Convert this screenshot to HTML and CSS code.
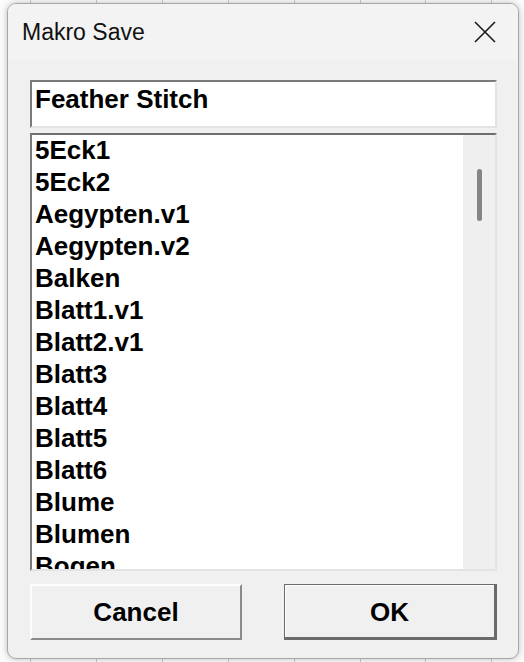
FILE: index.html
```html
<!DOCTYPE html>
<html>
<head>
<meta charset="utf-8">
<link rel="stylesheet" href="styles.css">
</head>
<body>
<div class="dialog">
  <div class="titlebar">
    <span class="title">Makro Save</span>
    <svg class="close" width="22" height="22" viewBox="0 0 22 22"><path d="M1 1 L21 21 M21 1 L1 21" stroke="#1a1a1a" stroke-width="1.6" fill="none"/></svg>
  </div>
  <div class="client">
    <div class="edit">Feather Stitch</div>
    <div class="list">
      <div class="items">
        <div class="item">5Eck1</div>
        <div class="item">5Eck2</div>
        <div class="item">Aegypten.v1</div>
        <div class="item">Aegypten.v2</div>
        <div class="item">Balken</div>
        <div class="item">Blatt1.v1</div>
        <div class="item">Blatt2.v1</div>
        <div class="item">Blatt3</div>
        <div class="item">Blatt4</div>
        <div class="item">Blatt5</div>
        <div class="item">Blatt6</div>
        <div class="item">Blume</div>
        <div class="item">Blumen</div>
        <div class="item">Bogen</div>
      </div>
      <div class="scrollbar"><div class="thumb"></div></div>
    </div>
    <div class="buttons">
      <div class="btn">Cancel</div>
      <div class="btn default">OK</div>
    </div>
  </div>
</div>
</body>
</html>
```
FILE: styles.css
```css
html, body {
  margin: 0;
  padding: 0;
}
body {
  width: 524px;
  height: 662px;
  overflow: hidden;
  background-color: #fbfbfb;
  background-image: repeating-linear-gradient(to right, transparent 0, transparent 30px, #c8c8c8 30px, #c8c8c8 31px, transparent 31px, transparent 65.9px);
  font-family: "Liberation Sans", Arial, sans-serif;
}
.dialog {
  margin: 3px 0 0 7px;
  width: 510px;
  height: 654px;
  border: 1px solid #a8a8a8;
  border-radius: 9px;
  background: #f0f0f0;
  box-shadow: 0 0 6px rgba(0,0,0,0.25);
  display: flex;
  flex-direction: column;
  overflow: hidden;
}
.titlebar {
  height: 56px;
  flex: none;
  background: #f3f3f3;
  display: flex;
  align-items: center;
  justify-content: space-between;
  padding: 0 22px 0 14px;
}
.title {
  font-size: 23px;
  color: #111;
}
.close {
  display: block;
}
.client {
  flex: 1;
  display: flex;
  flex-direction: column;
  padding: 20px 21px 0 22px;
}
.edit {
  height: 43px;
  background: #fff;
  border-style: solid;
  border-width: 2px;
  border-color: #7a7a7a #e3e3e3 #e3e3e3 #7a7a7a;
  font-weight: bold;
  font-size: 26px;
  line-height: 32px;
  padding: 1px 0 0 3px;
  color: #000;
}
.list {
  margin-top: 5px;
  height: 434px;
  background: #fff;
  border-style: solid;
  border-width: 2px;
  border-color: #6e6e6e #e3e3e3 #e3e3e3 #7a7a7a;
  display: flex;
  overflow: hidden;
}
.items {
  flex: 1;
  margin-top: -1px;
  padding-left: 3px;
  overflow: hidden;
}
.item {
  font-weight: bold;
  font-size: 26px;
  line-height: 32px;
  height: 32px;
  color: #000;
  white-space: nowrap;
}
.scrollbar {
  width: 32px;
  flex: none;
  background: #efefef;
  padding-top: 34px;
}
.thumb {
  margin-left: 14px;
  width: 5px;
  height: 52px;
  border-radius: 3px;
  background: #858585;
}
.buttons {
  margin-top: 13px;
  display: grid;
  grid-template-columns: 212px 213px;
  column-gap: 42px;
}
.btn {
  height: 52px;
  background: #f0f0f0;
  border-style: solid;
  border-width: 2px;
  border-color: #fdfdfd #8a8a8a #8a8a8a #fdfdfd;
  box-sizing: content-box;
  display: flex;
  align-items: center;
  justify-content: center;
  font-weight: bold;
  font-size: 26px;
  color: #000;
}
.btn.default {
  height: 50px;
  border-width: 1px 3px 3px 1px;
  border-color: #6a6a6a;
  box-shadow: inset 1px 1px 0 #fdfdfd;
  padding-top: 2px;
}
```
